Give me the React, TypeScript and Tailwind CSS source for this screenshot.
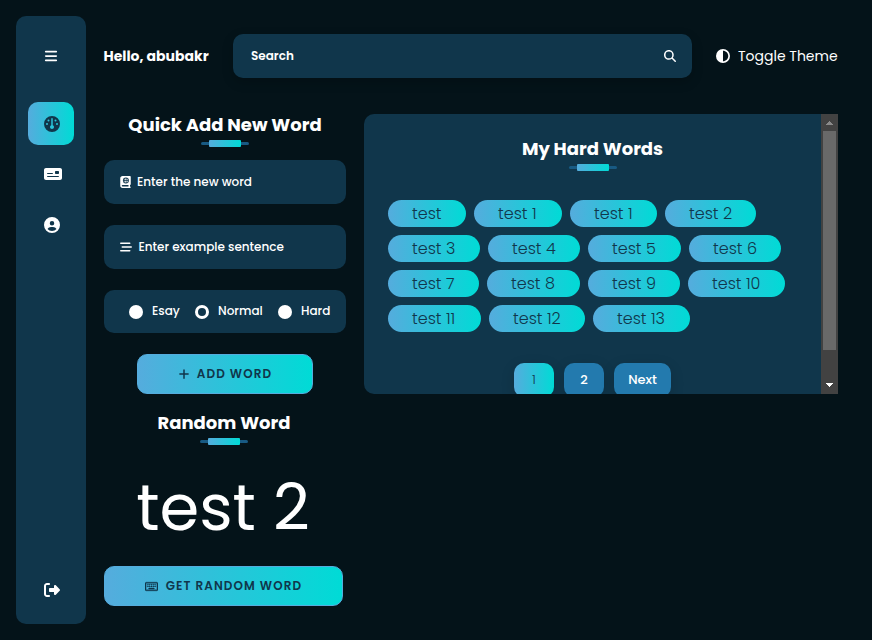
import React from "react";
import { FaBars, FaBookAtlas, FaBarsStaggered, FaCircleHalfStroke, FaCircleUser, FaMagnifyingGlass, FaMoneyCheck, FaPlus, FaRightFromBracket, FaRegKeyboard } from "react-icons/fa6";

function Gauge({ className }: { className: string }) {
  return (
    <svg viewBox="0 0 512 512" fill="currentColor" className={className}>
      <path d="M0 256a256 256 0 1 1 512 0A256 256 0 1 1 0 256zm320 96c0-26.9-16.5-49.9-40-59.3V88c0-13.3-10.7-24-24-24s-24 10.7-24 24V292.7c-23.5 9.5-40 32.5-40 59.3c0 35.3 28.7 64 64 64s64-28.7 64-64zM144 176a32 32 0 1 0 0-64 32 32 0 1 0 0 64zm-16 80a32 32 0 1 0 -64 0 32 32 0 1 0 64 0zm288 32a32 32 0 1 0 0-64 32 32 0 1 0 0 64zM400 144a32 32 0 1 0 -64 0 32 32 0 1 0 64 0z" />
    </svg>
  );
}

function Heading({ text }: { text: string }) {
  return (
    <div className="flex flex-col items-center">
      <h2 className="h-[27px] text-lg leading-6 font-bold whitespace-nowrap">{text}</h2>
      <div className="flex h-[7px] w-12 items-center justify-center">
        <span className="h-[3px] w-2 rounded-l bg-[#185a83]" />
        <span className="h-[7px] w-8 rounded-[1px] bg-[linear-gradient(90deg,#55acdd,#00dbd6)]" />
        <span className="h-[3px] w-2 rounded-r bg-[#185a83]" />
      </div>
    </div>
  );
}

const rows = [
  [["test", "w-[78px]"], ["test 1", "w-[88px]"], ["test 1", "w-[87px]"], ["test 2", "w-[91px]"]],
  [["test 3", "w-[92px]"], ["test 4", "w-[92px]"], ["test 5", "w-[93px]"], ["test 6", "w-[92px]"]],
  [["test 7", "w-[91px]"], ["test 8", "w-[93px]"], ["test 9", "w-[92px]"], ["test 10", "w-[97px]"]],
  [["test 11", "w-[93px]"], ["test 12", "w-[96px]"], ["test 13", "w-[97px]"]],
];

function Radio({ label, checked, className }: { label: string; checked?: boolean; className: string }) {
  return (
    <label className={`flex items-center ${className}`}>
      <span className={`mt-px mr-[9px] size-[14px] shrink-0 rounded-full border-white ${checked ? "border-[3px] bg-[#10364b]" : "bg-white"}`} />
      <span className="mb-px whitespace-nowrap">{label}</span>
    </label>
  );
}

export default function App() {
  return (
    <div className="flex h-[640px] w-[872px] overflow-hidden bg-[#041319] p-4 font-['Poppins','Inter',sans-serif] text-white">
      <aside className="flex h-[608px] w-[70px] shrink-0 flex-col items-center rounded-[10px] bg-[#10364b] pt-[33px]">
        <FaBars className="size-[14px]" />
        <div className="mt-[39px] flex h-[43px] w-[46px] items-center justify-center rounded-[10px] bg-[linear-gradient(90deg,#55acdd,#00dbd6)]">
          <Gauge className="ml-[2px] size-4 text-[#10364b]" />
        </div>
        <FaMoneyCheck className="mt-5 ml-1 h-[18px] w-[18px]" />
        <FaCircleUser className="mt-[34px] ml-[2px] size-4" />
        <FaRightFromBracket className="mt-auto mb-[26px] ml-[2px] size-4" />
      </aside>

      <main className="ml-[18px] w-[734px] shrink-0 pt-[18px]">
        <header className="flex h-11 items-center">
          <p className="-ml-[0.5px] w-[129.5px] shrink-0 text-sm font-bold whitespace-nowrap">Hello, abubakr</p>
          <div className="flex h-11 w-[459px] items-center justify-between rounded-[10px] bg-[#10364b] pr-4 pl-[18px] shadow-[0_4px_12px_rgba(0,0,0,0.2)]">
            <span className="text-xs font-semibold">Search</span>
            <FaMagnifyingGlass className="size-3" />
          </div>
          <FaCircleHalfStroke className="ml-6 size-[14px]" />
          <span className="ml-2 text-sm whitespace-nowrap">Toggle Theme</span>
        </header>

        <div className="mt-9 flex items-start gap-[18px]">
          <section className="-mt-px w-[242px] shrink-0 text-xs font-medium">
            <Heading text="Quick Add New Word" />
            <div className="mt-[13px] flex h-11 items-center rounded-[10px] bg-[#10364b] pl-4">
              <FaBookAtlas className="h-3 w-[11px]" />
              <span className="ml-[6px]">Enter the new word</span>
            </div>
            <div className="mt-[21px] flex h-11 items-center rounded-[10px] bg-[#10364b] pl-4">
              <FaBarsStaggered className="size-3" />
              <span className="ml-[6.5px]">Enter example sentence</span>
            </div>
            <div className="mt-[21px] flex h-[43px] items-center rounded-[10px] bg-[#10364b] pl-[25px]">
              <Radio label="Esay" className="w-[66px]" />
              <Radio label="Normal" checked className="w-[83px]" />
              <Radio label="Hard" className="w-[60px]" />
            </div>
            <button className="mx-auto mt-[21px] flex h-10 w-44 items-center justify-center rounded-[10px] border border-[#55acdd] bg-[linear-gradient(90deg,#55acdd,#00dbd6)] text-[#10364b]">
              <FaPlus className="size-3" />
              <span className="ml-[7px] font-semibold tracking-[1.1px]">ADD WORD</span>
            </button>
            <div className="mt-[17px] pr-[2px]"><Heading text="Random Word" /></div>
            <p className="mt-[15px] h-24 pr-1 text-center text-[64px] leading-[96px] font-normal whitespace-nowrap">test 2</p>
            <button className="mt-[10px] flex h-10 w-[239px] items-center justify-center rounded-[10px] border border-[#55acdd] bg-[linear-gradient(90deg,#55acdd,#00dbd6)] text-[#10364b]">
              <FaRegKeyboard className="size-[13px] stroke-[#10364b] stroke-[16px]" />
              <span className="ml-2 font-semibold tracking-[1.08px] whitespace-nowrap">GET RANDOM WORD</span>
            </button>
          </section>

          <section className="flex h-[280px] w-[474px] shrink-0 overflow-hidden rounded-l-[10px] bg-[#10364b]">
            <div className="w-[457px] shrink-0 px-6 pt-[23px]">
              <Heading text="My Hard Words" />
              <div className="mt-[29px] flex flex-col gap-2">
                {rows.map((row, i) => (
                  <div key={i} className="flex gap-2">
                    {row.map(([label, width], j) => (
                      <span key={j} className={`flex h-[27px] shrink-0 items-center rounded-full bg-[linear-gradient(90deg,#55acdd,#00dbd6)] pl-6 text-base font-light whitespace-nowrap text-[#10364b] ${width}`}>{label}</span>
                    ))}
                  </div>
                ))}
              </div>
              <div className="mt-[31px] flex justify-center gap-[10px] text-[13px] font-medium *:flex *:h-[34px] *:items-center *:justify-center *:rounded-[10px] *:shadow-[0_4px_14px_rgba(0,0,0,0.15)]">
                <span className="w-10 bg-[linear-gradient(90deg,#55acdd,#00dbd6)] font-light text-[#10364b]">1</span>
                <span className="w-10 bg-[#237aae]">2</span>
                <span className="w-[57px] bg-[#237aae]">Next</span>
              </div>
            </div>
            <div className="flex w-[17px] shrink-0 flex-col items-center bg-[#424242]">
              <svg className="h-[17px] w-[17px] shrink-0" viewBox="0 0 17 17" shapeRendering="crispEdges"><path d="M5 11h7L8.5 7z" fill="#8a8a8a" /></svg>
              <div className="h-[219px] w-[13px] bg-[#696969]" />
              <svg className="mt-auto h-[17px] w-[17px] shrink-0" viewBox="0 0 17 17" shapeRendering="crispEdges"><path d="M5 6h7L8.5 10z" fill="#fff" /></svg>
            </div>
          </section>
        </div>
      </main>
    </div>
  );
}
